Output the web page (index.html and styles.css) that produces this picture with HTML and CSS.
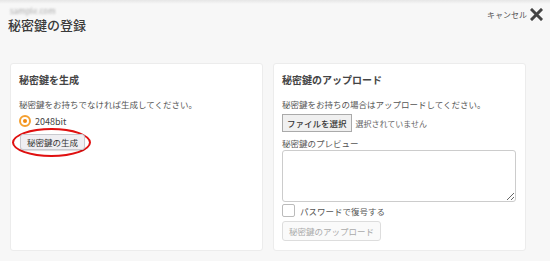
FILE: index.html
```html
<!DOCTYPE html>
<html lang="ja">
<head>
    <meta charset="UTF-8">
    <title>秘密鍵の登録</title>
    <link rel="stylesheet" href="styles.css">
</head>
<body>
    <div class="page">
        <div class="top">
            <div class="heading">
                <div class="site">sample.com</div>
                <h1>秘密鍵の登録</h1>
            </div>
            <div class="cancel">キャンセル
                <svg width="13" height="13" viewBox="0 0 13 13"><path d="M2 2L11 11M11 2L2 11" stroke="#444" stroke-width="3" stroke-linecap="square"/></svg>
            </div>
        </div>

        <div class="cards">
            <div class="card">
                <h2>秘密鍵を生成</h2>
                <p>秘密鍵をお持ちでなければ生成してください。</p>
                <label class="radio"><span class="dot"></span>2048bit</label>
                <div class="mark">
                    <button class="btn">秘密鍵の生成</button>
                </div>
            </div>
            <div class="card">
                <h2>秘密鍵のアップロード</h2>
                <p>秘密鍵をお持ちの場合はアップロードしてください。</p>
                <div class="file">
                    <button class="btn file-btn">ファイルを選択</button>
                    <span>選択されていません</span>
                </div>
                <div class="label">秘密鍵のプレビュー</div>
                <textarea class="preview"></textarea>
                <label class="check"><span class="box"></span>パスワードで復号する</label>
                <button class="btn disabled" disabled>秘密鍵のアップロード</button>
            </div>
        </div>
    </div>
</body>
</html>
```

FILE: styles.css
```css
body { margin: 0; background: #f7f7f7; font-family: "Noto Sans CJK JP", "Noto Sans", sans-serif; color: #333; }
.page { padding: 0 7px 0 10px; height: 261px; box-sizing: border-box; background: linear-gradient(#e6e6e6, #f7f7f7 4px); }
.top { display: flex; justify-content: space-between; align-items: flex-start; height: 63px; margin-left: -2px; }
.site { font-size: 8px; color: #aaa; filter: blur(1.2px); margin-top: 5px; line-height: 12px; padding-left: 2px; }
h1 { margin: -1px 0 0; font-size: 13px; font-weight: 500; color: #3a3a3a; line-height: 18px; }
.cancel { display: flex; align-items: center; gap: 3px; font-size: 8px; color: #555; margin-top: 8px; }
.cards { display: flex; gap: 10px; padding-right: 17px; }
.card { flex: 1; height: 188px; box-sizing: border-box; background: #fff; border: 1px solid #ececec; border-radius: 3px; padding: 9px 8px; display: flex; flex-direction: column; align-items: flex-start; }
h2 { margin: 0 0 11px; font-size: 10px; font-weight: 700; color: #444; line-height: 14px; }
p { margin: 0 0 4px; font-size: 8.5px; color: #555; line-height: 12px; }
.radio { display: flex; align-items: center; gap: 4px; font-size: 9px; color: #444; height: 14px; }
.dot { width: 8px; height: 8px; border-radius: 50%; border: 2px solid #f5a030; background: #fff; position: relative; }
.dot::after { content: ""; position: absolute; left: 2px; top: 2px; width: 4px; height: 4px; border-radius: 50%; background: #f08a10; }
.mark { display: flex; margin: 0 0 0 -7px; padding: 4px 4px 5px 6px; border: 2px solid #e01010; border-radius: 50%; }
.btn { font-family: inherit; font-size: 8.5px; color: #333; background: #efeef2; border: 1px solid #c9c9cf; border-radius: 3px; padding: 1px 6px; line-height: 12px; box-shadow: 0 1px 1px rgba(0,0,0,0.15); }
.file { display: flex; align-items: center; gap: 4px; font-size: 8px; color: #666; }
.file-btn { border-radius: 0; padding: 1px 4px; background: #f0f0f0; border-color: #aaa; box-shadow: none; font-weight: 500; line-height: 14px; }
.label { font-size: 8.5px; color: #555; margin-top: 5px; line-height: 12px; }
.preview { width: 234px; height: 55px; box-sizing: border-box; border: 1px solid #ccc; border-radius: 3px; margin-top: 1px; resize: vertical; }
.check { display: flex; align-items: center; gap: 5px; font-size: 8.5px; color: #555; margin-top: 2px; }
.box { width: 11px; height: 11px; border: 1px solid #bbb; border-radius: 2px; background: #fff; }
.disabled { margin-top: 4px; padding: 3px 6px; background: #fafafa; color: #aaa; border-color: #ddd; box-shadow: none; }
```
